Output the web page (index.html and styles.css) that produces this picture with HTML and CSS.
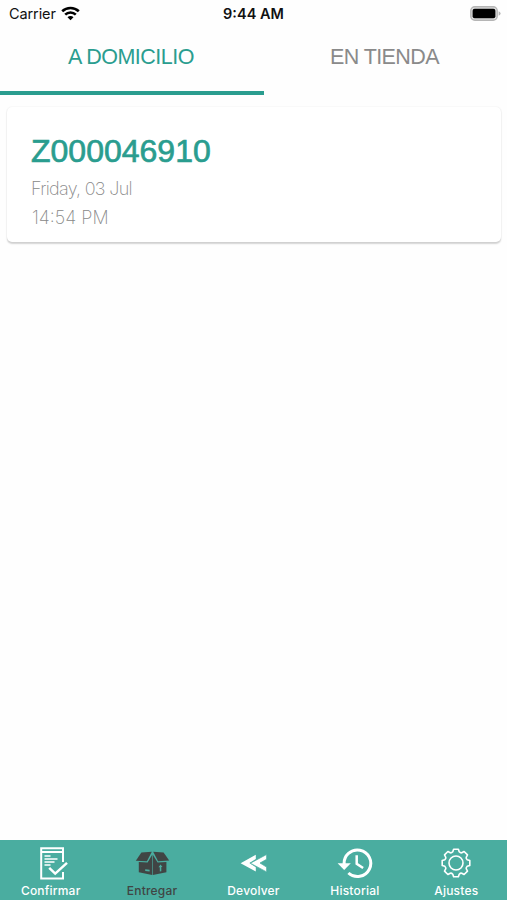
FILE: index.html
```html
<!DOCTYPE html>
<html lang="es">
<head>
    <meta charset="UTF-8">
    <meta name="viewport" content="width=device-width, initial-scale=1.0">
    <title>Entregar</title>
    <link rel="stylesheet" href="styles.css">
</head>
<body>

<header class="status-bar">
  <div class="status-bar__carrier">
    <span class="carrier">Carrier</span>
    <svg width="19" height="15" viewBox="0 0 19 15" fill="none" stroke="#000" stroke-width="2.6">
      <path d="M1.2 5.3a12 12 0 0 1 16.6 0" />
      <path d="M4.2 8.6a7.6 7.6 0 0 1 10.6 0" />
      <path d="M9.5 14.2l-3-3a4.2 4.2 0 0 1 6 0z" fill="#000" stroke="none" />
    </svg>
  </div>
  <span class="time">9:44 AM</span>
  <svg class="battery" width="31" height="15" viewBox="0 0 31 15">
    <rect x="0.8" y="0.8" width="26.4" height="13.4" rx="4" fill="#ddd" stroke="#b5b5b5" stroke-width="1.4" />
    <rect x="2.6" y="2.8" width="22.8" height="9.4" rx="2" />
    <path d="M28.6 5.2q2 .7 2 2.3t-2 2.3z" fill="#b5b5b5" />
  </svg>
</header>

<nav class="tabs">
  <a class="tab tab--active">A DOMICILIO</a>
  <a class="tab">EN TIENDA</a>
</nav>

<main>
  <article class="card">
    <h1 class="card__code">Z000046910</h1>
    <p class="card__date">Friday, 03 Jul</p>
    <p class="card__hour">14:54 PM</p>
  </article>
</main>

<nav class="bottom-bar">
  <a class="item">
    <svg viewBox="0 0 36 36" fill="none" stroke="#fff" stroke-width="2">
      <path d="M30 17V3.2H8.2v30.3H30V27M8 7h22" />
      <path d="M11.5 11h6M11.5 14h13M11.5 17h10M11.5 20h6" stroke-width="1.7" />
      <path d="M16.2 22.8l6 5.8L34 17.8" stroke-width="2.5" />
    </svg>
    <span>Confirmar</span>
  </a>
  <a class="item item--active">
    <svg viewBox="0 0 36 36" fill="#404544">
      <path d="M7.4 7.6L17.8 6.8 12.9 16.2 1.8 15.8z" />
      <path d="M29.6 7.6L19.2 6.8l4.9 9.4 11.1-.6z" />
      <path d="M4.8 17l8.8.4 4.6-7.6V30L4.8 27.2z" />
      <path d="M32.4 17l-8.8.4L18.8 9.8V30l13.6-2.8z" />
      <path d="M11.2 24.2l4.4.5v1.8l-4.4-.5zM26.5 19.5l2 2.6h-1.2v4.2l-1.5.2v-4.2h-1.3z" fill="#4aada0" />
    </svg>
    <span>Entregar</span>
  </a>
  <a class="item">
    <svg viewBox="0 0 36 36" fill="#fff">
      <path d="M20.8 9.7v4.4L14.4 18l6.4 4.3v4.2L5.6 18.2z" />
      <path d="M31.6 9.5v4.8L25 18l6.6 4.1v4.8L15.4 18.2z" stroke="#4aada0" stroke-width=".7" />
    </svg>
    <span>Devolver</span>
  </a>
  <a class="item">
    <svg viewBox="0 0 36 36" fill="none" stroke="#fff" stroke-width="3">
      <path d="M7.2 19.5A13.3 13.3 0 1 1 11.4 28" />
      <path d="M.6 18.2h13.2L7.2 25z" fill="#fff" stroke="none" />
      <path d="M19.7 10.2v8.6l6.4 4.2" stroke-width="2.5" />
    </svg>
    <span>Historial</span>
  </a>
  <a class="item">
    <svg viewBox="-18 -18 36 36" fill="none" stroke="#fff" stroke-width="1.6" stroke-linejoin="round">
      <path d="M-2.4-13.8H2.4L3.2-11.2Q4.5-9.9 5.7-10.2L8.1-11.5 11.5-8.1 10.2-5.7Q9.9-4.5 11.2-3.2L13.8-2.4V2.4L11.2 3.2Q9.9 4.5 10.2 5.7L11.5 8.1 8.1 11.5 5.7 10.2Q4.5 9.9 3.2 11.2L2.4 13.8H-2.4L-3.2 11.2Q-4.5 9.9-5.7 10.2L-8.1 11.5-11.5 8.1-10.2 5.7Q-9.9 4.5-11.2 3.2L-13.8 2.4V-2.4L-11.2-3.2Q-9.9-4.5-10.2-5.7L-11.5-8.1-8.1-11.5-5.7-10.2Q-4.5-9.9-3.2-11.2Z" />
      <circle r="7" />
    </svg>
    <span>Ajustes</span>
  </a>
</nav>

</body>
</html>
```
FILE: styles.css
```css
:root {
  --clr-primary: #2a9d8f;
  --clr-bar: #4aada0;
  --clr-dark: #404544;
}

* {
  box-sizing: border-box;
}

body {
  margin: 0;
  height: 100vh;
  display: flex;
  flex-direction: column;
  background: #fefefe;
  font-family: "Liberation Sans", Arial, sans-serif;
}

/* status bar */

.status-bar {
  height: 27px;
  padding: 0 6px 0 9px;
  display: grid;
  grid-template-columns: 1fr auto 1fr;
  align-items: center;
  font-family: Inter, sans-serif;
  font-size: 14.5px;
  color: #111;
}

.status-bar__carrier {
  display: flex;
  align-items: center;
  gap: 5px;
}

.carrier {
  letter-spacing: -0.1px;
}

.time {
  margin-right: 3px;
  font-weight: 600;
}

.battery {
  justify-self: end;
}

/* tabs */

.tabs {
  height: 68px;
  display: grid;
  grid-template-columns: 264px 1fr;
}

.tab {
  padding: 17px 2px 0 0;
  border-bottom: 4px solid transparent;
  text-align: center;
  font-size: 21.5px;
  line-height: 26px;
  letter-spacing: -0.6px;
  white-space: nowrap;
  color: #8a8a8a;
}

.tab--active {
  border-color: var(--clr-primary);
  letter-spacing: -0.5px;
  color: var(--clr-primary);
}

/* card */

main {
  flex: 1;
  padding: 12px 6px 0 7px;
}

.card {
  height: 135px;
  padding: 25px 24px 0;
  border-radius: 5px;
  background: #fff;
  box-shadow: 0 1.5px 1.5px rgba(0, 0, 0, 0.17), 0 0 2px rgba(0, 0, 0, 0.07);
}

.card h1,
.card p {
  margin: 0;
}

.card__code {
  width: max-content;
  font-size: 32px;
  line-height: 38px;
  font-weight: 400;
  color: var(--clr-primary);
  -webkit-text-stroke: 0.7px var(--clr-primary);
}

.card p {
  width: max-content;
  font-family: Inter, sans-serif;
  font-weight: 200;
  font-size: 18px;
  line-height: 29px;
  color: #888;
}

.card .card__date {
  margin-top: 4px;
  letter-spacing: -0.7px;
}

.card .card__hour {
  margin-left: 1px;
}

/* bottom bar */

.bottom-bar {
  height: 60px;
  display: grid;
  grid-template-columns: repeat(5, 1fr);
  background: var(--clr-bar);
}

.item {
  padding-top: 5px;
  display: flex;
  flex-direction: column;
  align-items: center;
  font-family: Inter, sans-serif;
  font-size: 12px;
  font-weight: 500;
  line-height: 20px;
  letter-spacing: 0.2px;
  color: #fff;
}

.item svg {
  width: 36px;
  height: 36px;
}

.item--active {
  color: var(--clr-dark);
}
```
